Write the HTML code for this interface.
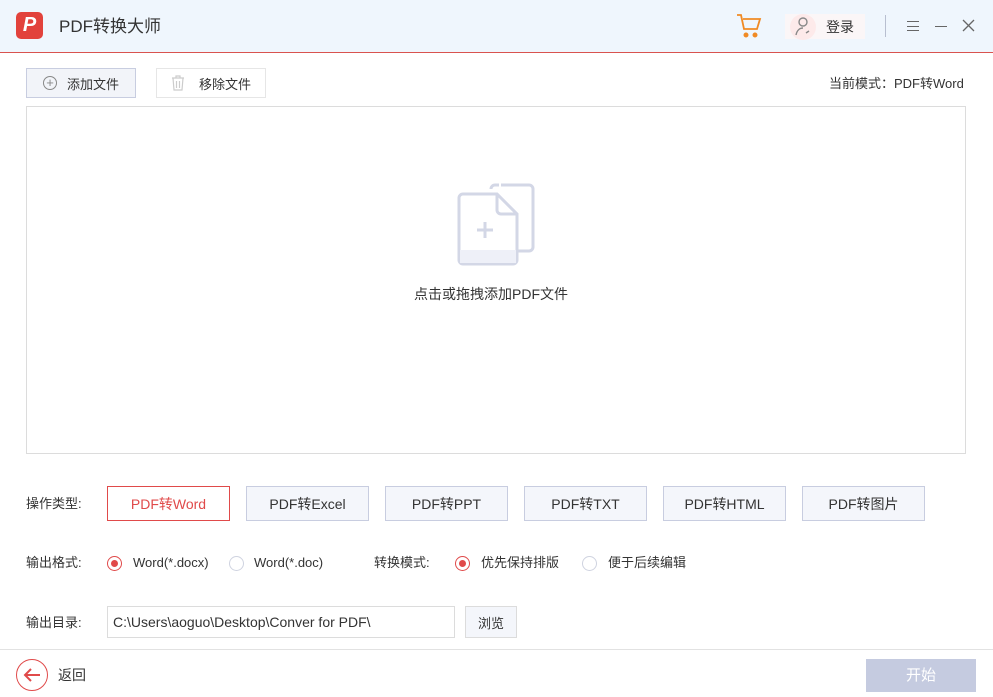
<!DOCTYPE html><html><head><meta charset="utf-8"><style>
*{margin:0;padding:0;box-sizing:border-box}
body{width:993px;height:697px;background:#fff;font-family:"Liberation Sans","Noto Sans CJK SC",sans-serif;font-size:13px;color:#333;position:relative;overflow:hidden}
.a{position:absolute}
.hdr{left:0;top:0;width:993px;height:53px;background:#eff6fd;border-bottom:1px solid #d9534f}
.btn{position:absolute;border:1px solid #d0d4e4;background:#fff;display:flex;align-items:center;justify-content:center;font-size:13px;color:#333}
.tb{top:486px;width:123px;height:35px;border:1px solid #c8cde0;background:#f4f6fb;font-size:14px}
.radio{position:absolute;width:15px;height:15px;border-radius:50%;border:1px solid #cfd3e0;background:#fff}
.radio.on{border-color:#e04a4a}
.radio.on:after{content:"";position:absolute;left:3px;top:3px;width:7px;height:7px;border-radius:50%;background:#e04a4a}
.lbl{position:absolute;font-size:13px;color:#333;line-height:16px}
</style></head><body>
<div class="a hdr"></div>
<div class="a" style="left:16px;top:12px;width:27px;height:27px;border-radius:5px;background:#e2423c;color:#fff;font-weight:bold;font-style:italic;font-size:20px;text-align:center;line-height:27px">P</div>
<div class="a" style="left:59px;top:16px;font-size:17px;color:#333;line-height:22px">PDF转换大师</div>
<svg class="a" style="left:736px;top:13px" width="26" height="26" viewBox="0 0 26 26" fill="none" stroke="#f08a24" stroke-width="1.8"><path d="M1 2h4l3 14h13l3-10H7"/><circle cx="10" cy="22" r="1.6" fill="#f08a24"/><circle cx="19" cy="22" r="1.6" fill="#f08a24"/></svg>
<div class="a" style="left:785px;top:14px;width:80px;height:25px;background:#fbf6f7"></div>
<div class="a" style="left:790px;top:14px;width:26px;height:26px;border-radius:50%;background:#fdeaea"></div>
<svg class="a" style="left:793px;top:15px" width="20" height="22" viewBox="0 0 20 22" fill="none" stroke="#888" stroke-width="1.4"><circle cx="10" cy="7" r="4"/><path d="M3 20c1-5 4-7 7-7M13 18l3-2"/></svg>
<div class="a" style="left:826px;top:18px;font-size:14px;line-height:18px">登录</div>
<div class="a" style="left:885px;top:15px;width:1px;height:22px;background:#b8bfd0"></div>
<div class="a" style="left:907px;top:21px;width:12px;height:10px;border-top:1px solid #666;border-bottom:1px solid #666"></div>
<div class="a" style="left:907px;top:26px;width:12px;height:1px;background:#666"></div>
<div class="a" style="left:935px;top:26px;width:12px;height:1px;background:#666"></div>
<svg class="a" style="left:962px;top:19px" width="13" height="13" viewBox="0 0 13 13" stroke="#666" stroke-width="1.3"><path d="M1 1l11 11M12 1L1 12"/></svg>
<div class="btn" style="left:26px;top:68px;width:110px;height:30px;background:#f2f4f9;border-color:#c8cde0"><span style="display:inline-block;width:14px;height:14px;border:1px solid #888;border-radius:50%;text-align:center;line-height:11px;font-size:13px;color:#888;margin-right:10px">+</span>添加文件</div>
<div class="btn" style="left:156px;top:68px;width:110px;height:30px;border-color:#e6e6e6"><svg width="14" height="16" viewBox="0 0 14 16" fill="none" stroke="#ccc" stroke-width="1.2" style="margin-right:14px"><path d="M1 3h12M5 3V1h4v2M2 3l1 12h8l1-12M5.5 6v7M8.5 6v7"/></svg>移除文件</div>
<div class="a" style="left:829px;top:76px;font-size:13px;line-height:16px">当前模式：PDF转Word</div>
<div class="a" style="left:26px;top:106px;width:940px;height:348px;border:1px solid #dcdcdc"></div>
<svg class="a" style="left:455px;top:180px" width="82" height="90" viewBox="0 0 82 90" fill="none" stroke="#d3d7e6" stroke-width="3"><path d="M46 5h28a4 4 0 0 1 4 4v58a4 4 0 0 1-4 4H62"/><path d="M44 5h-4a4 4 0 0 0-4 4" /><path d="M8 14h34l20 20v46a4 4 0 0 1-4 4H8a4 4 0 0 1-4-4V18a4 4 0 0 1 4-4z" fill="#fff"/><path d="M42 14v16a4 4 0 0 0 4 4h16"/><path d="M38 50h-16M30 42v16"/><rect x="5" y="70" width="56" height="13" fill="#eef0f8" stroke="none"/></svg>
<div class="a" style="left:414px;top:285px;font-size:14px;line-height:18px">点击或拖拽添加PDF文件</div>
<div class="lbl" style="left:26px;top:496px">操作类型:</div>
<div class="btn tb" style="left:107px;border-color:#e04a4a;background:#fff;color:#e04a4a">PDF转Word</div>
<div class="btn tb" style="left:246px">PDF转Excel</div>
<div class="btn tb" style="left:385px">PDF转PPT</div>
<div class="btn tb" style="left:524px">PDF转TXT</div>
<div class="btn tb" style="left:663px">PDF转HTML</div>
<div class="btn tb" style="left:802px">PDF转图片</div>
<div class="lbl" style="left:26px;top:555px">输出格式:</div>
<div class="radio on" style="left:107px;top:556px"></div><div class="lbl" style="left:133px;top:555px">Word(*.docx)</div>
<div class="radio" style="left:229px;top:556px"></div><div class="lbl" style="left:254px;top:555px">Word(*.doc)</div>
<div class="lbl" style="left:374px;top:555px">转换模式:</div>
<div class="radio on" style="left:455px;top:556px"></div><div class="lbl" style="left:481px;top:555px">优先保持排版</div>
<div class="radio" style="left:582px;top:556px"></div><div class="lbl" style="left:608px;top:555px">便于后续编辑</div>
<div class="lbl" style="left:26px;top:615px">输出目录:</div>
<div class="a" style="left:107px;top:606px;width:348px;height:32px;border:1px solid #dcdcdc;padding-left:5px;line-height:30px;font-size:14px">C:\Users\aoguo\Desktop\Conver for PDF\</div>
<div class="btn" style="left:465px;top:606px;width:52px;height:32px;background:#f4f6fb;border-color:#dcdcdc">浏览</div>
<div class="a" style="left:0;top:649px;width:993px;height:1px;background:#e2e2e2"></div>
<div class="a" style="left:16px;top:659px;width:32px;height:32px;border-radius:50%;border:1.5px solid #e04a4a"></div>
<svg class="a" style="left:22px;top:666px" width="20" height="18" viewBox="0 0 20 18" fill="none" stroke="#e04a4a" stroke-width="2"><path d="M18 9H3M9 3L3 9l6 6"/></svg>
<div class="a" style="left:58px;top:666px;font-size:14px;line-height:18px">返回</div>
<div class="a" style="left:866px;top:659px;width:110px;height:33px;background:#c5cbe0;color:#fff;font-size:15px;text-align:center;line-height:33px">开始</div>
</body></html>
